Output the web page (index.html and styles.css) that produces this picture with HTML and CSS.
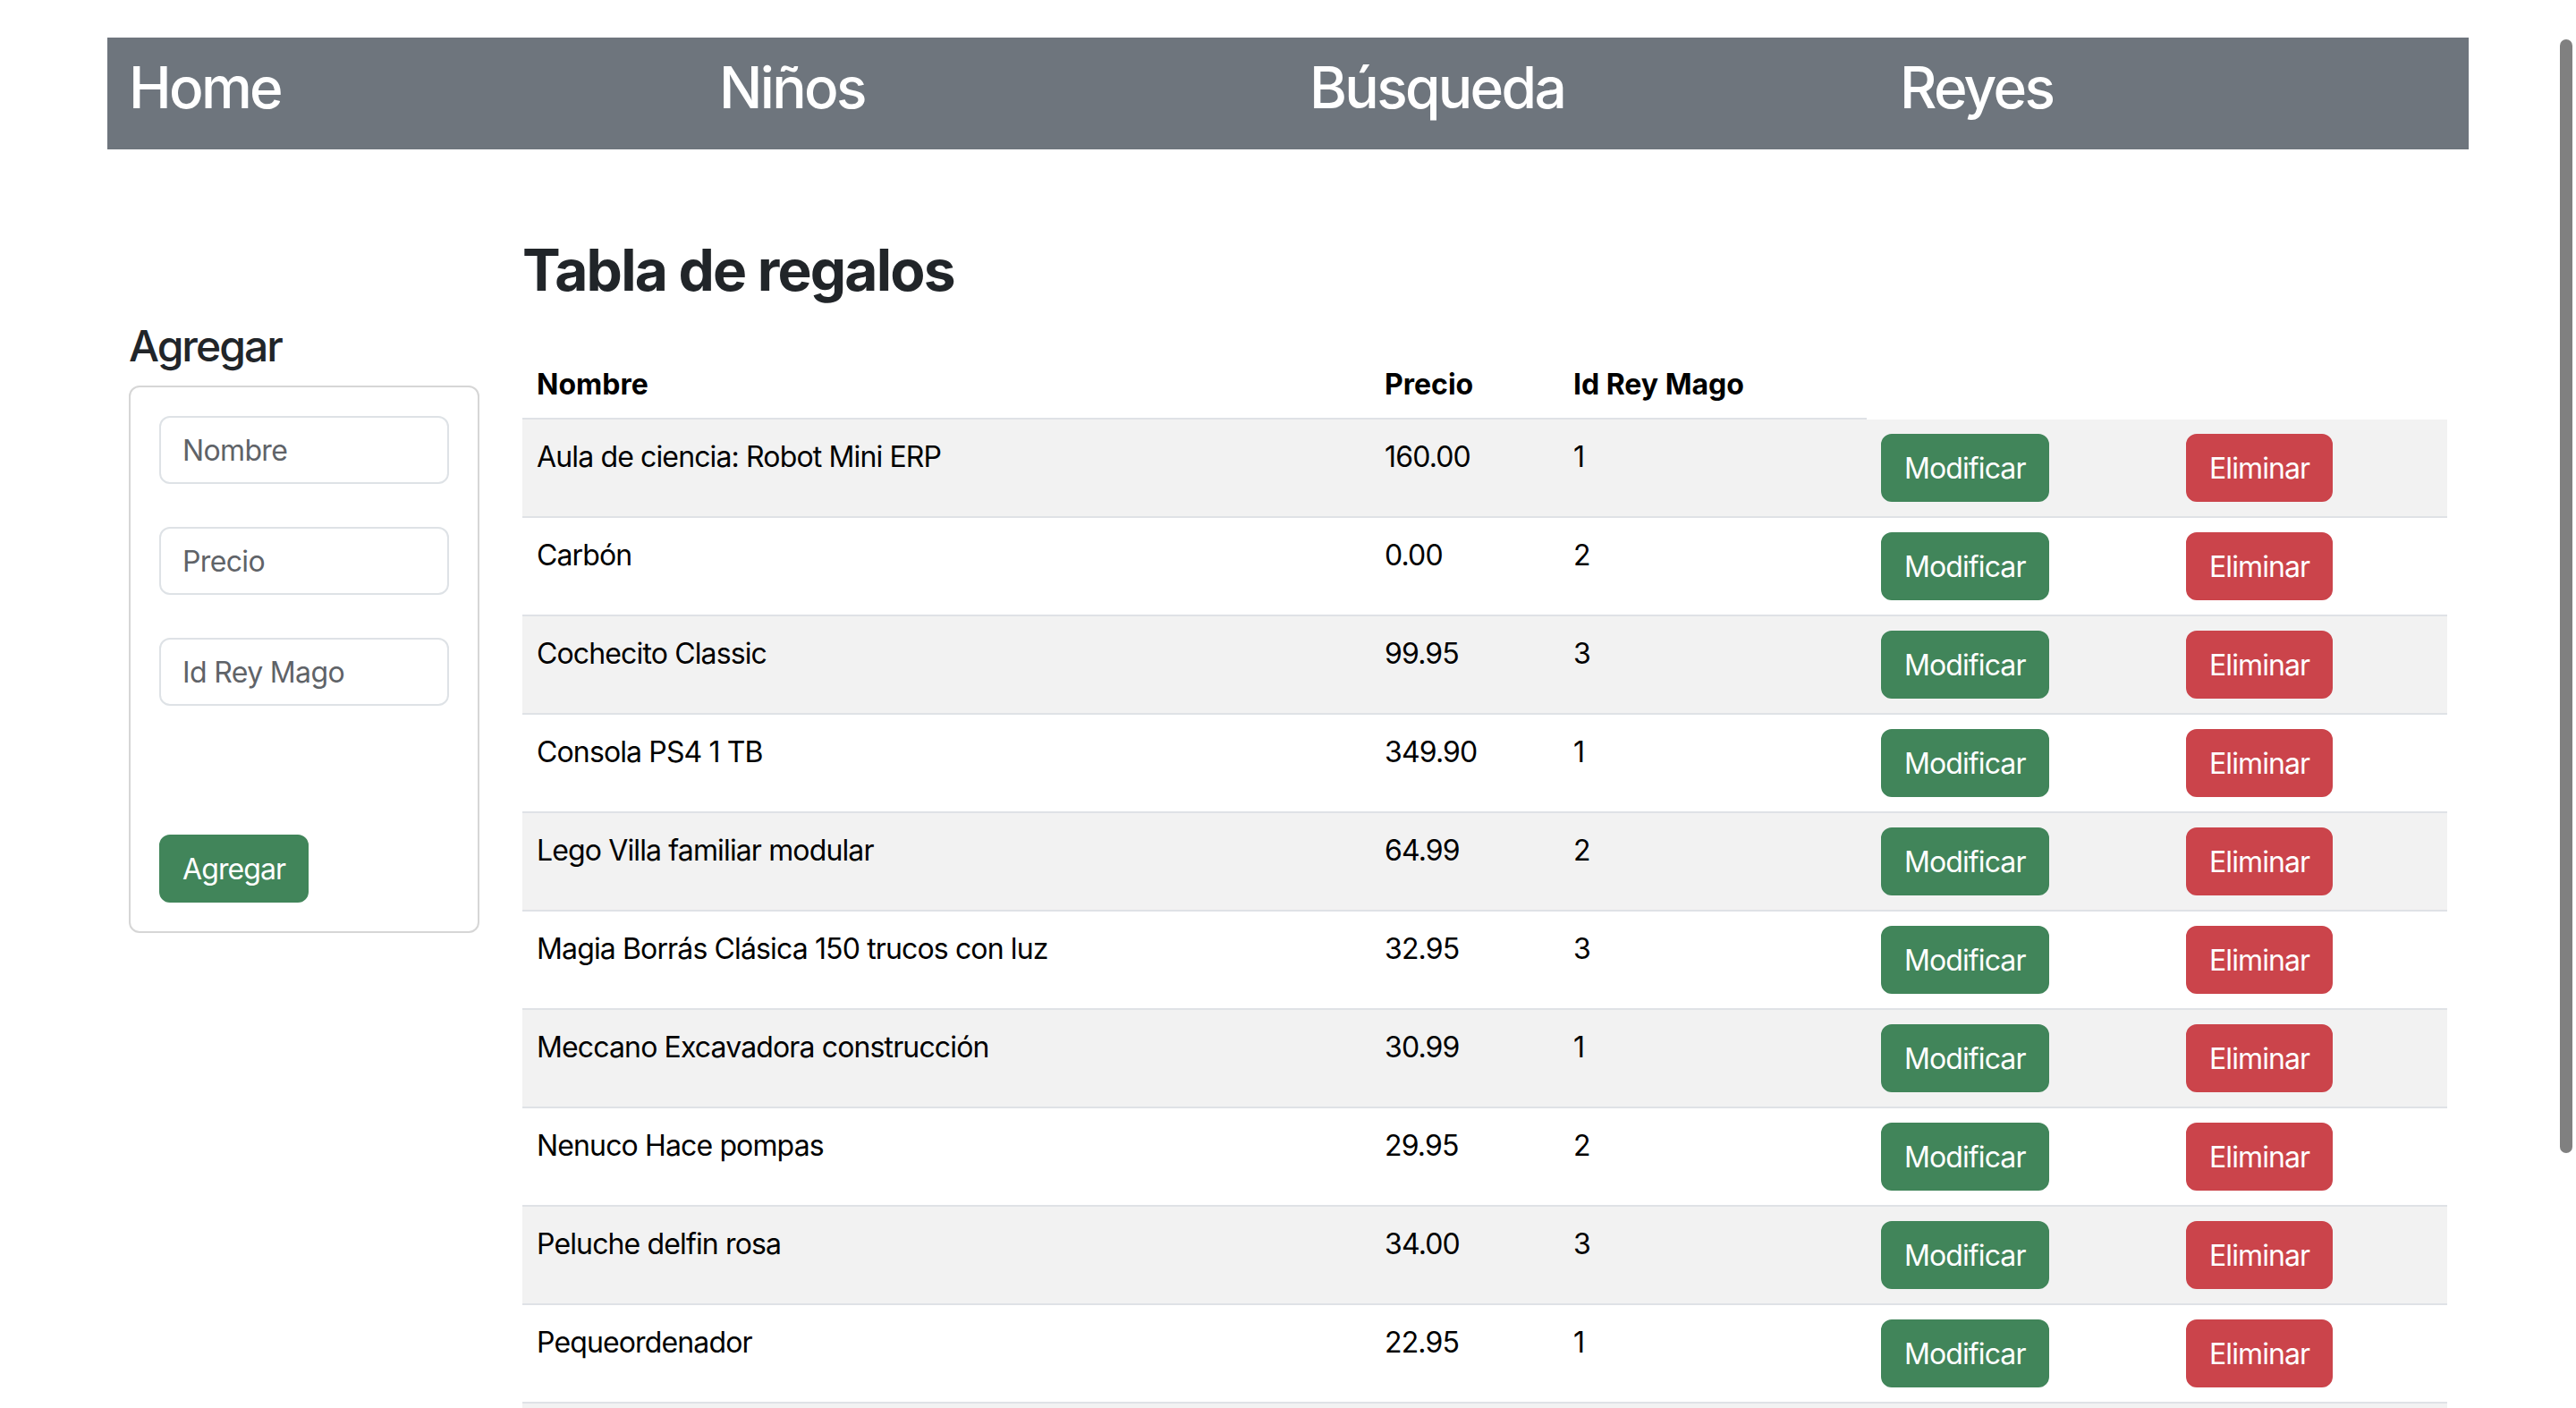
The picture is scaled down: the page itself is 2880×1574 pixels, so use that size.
FILE: index.html
```html
<!DOCTYPE html>
<html lang="es">
<head>
<meta charset="utf-8">
<title>Regalos de Reyes</title>
<link rel="stylesheet" href="styles.css">
</head>
<body>
<nav class="topnav">
  <div class="topnav-row">
    <div class="topnav-col"><h2 class="topnav-title">Home</h2></div>
    <div class="topnav-col"><h2 class="topnav-title">Niños</h2></div>
    <div class="topnav-col"><h2 class="topnav-title">Búsqueda</h2></div>
    <div class="topnav-col"><h2 class="topnav-title">Reyes</h2></div>
  </div>
</nav>
<main class="layout">
  <aside class="sidebar">
    <h4 class="sidebar-title">Agregar</h4>
    <form class="card">
      <input class="field" type="text" placeholder="Nombre">
      <input class="field" type="text" placeholder="Precio">
      <input class="field" type="text" placeholder="Id Rey Mago">
      <button class="btn btn-success btn-add" type="button">Agregar</button>
    </form>
  </aside>
  <section class="content">
    <h2 class="content-title">Tabla de regalos</h2>
    <table class="gifts">
      <colgroup>
        <col class="col-name">
        <col class="col-price">
        <col class="col-king">
        <col class="col-edit">
        <col class="col-del">
      </colgroup>
      <thead>
        <tr><th>Nombre</th><th>Precio</th><th>Id Rey Mago</th></tr>
      </thead>
      <tbody>
        <tr><td>Aula de ciencia: Robot Mini ERP</td><td>160.00</td><td>1</td><td><button class="btn btn-success" type="button">Modificar</button></td><td><button class="btn btn-danger" type="button">Eliminar</button></td></tr>
        <tr><td>Carbón</td><td>0.00</td><td>2</td><td><button class="btn btn-success" type="button">Modificar</button></td><td><button class="btn btn-danger" type="button">Eliminar</button></td></tr>
        <tr><td>Cochecito Classic</td><td>99.95</td><td>3</td><td><button class="btn btn-success" type="button">Modificar</button></td><td><button class="btn btn-danger" type="button">Eliminar</button></td></tr>
        <tr><td>Consola PS4 1 TB</td><td>349.90</td><td>1</td><td><button class="btn btn-success" type="button">Modificar</button></td><td><button class="btn btn-danger" type="button">Eliminar</button></td></tr>
        <tr><td>Lego Villa familiar modular</td><td>64.99</td><td>2</td><td><button class="btn btn-success" type="button">Modificar</button></td><td><button class="btn btn-danger" type="button">Eliminar</button></td></tr>
        <tr><td>Magia Borrás Clásica 150 trucos con luz</td><td>32.95</td><td>3</td><td><button class="btn btn-success" type="button">Modificar</button></td><td><button class="btn btn-danger" type="button">Eliminar</button></td></tr>
        <tr><td>Meccano Excavadora construcción</td><td>30.99</td><td>1</td><td><button class="btn btn-success" type="button">Modificar</button></td><td><button class="btn btn-danger" type="button">Eliminar</button></td></tr>
        <tr><td>Nenuco Hace pompas</td><td>29.95</td><td>2</td><td><button class="btn btn-success" type="button">Modificar</button></td><td><button class="btn btn-danger" type="button">Eliminar</button></td></tr>
        <tr><td>Peluche delfin rosa</td><td>34.00</td><td>3</td><td><button class="btn btn-success" type="button">Modificar</button></td><td><button class="btn btn-danger" type="button">Eliminar</button></td></tr>
        <tr><td>Pequeordenador</td><td>22.95</td><td>1</td><td><button class="btn btn-success" type="button">Modificar</button></td><td><button class="btn btn-danger" type="button">Eliminar</button></td></tr>
        <tr><td>Puzzle 1000 piezas</td><td>14.95</td><td>2</td><td><button class="btn btn-success" type="button">Modificar</button></td><td><button class="btn btn-danger" type="button">Eliminar</button></td></tr>
        <tr><td>Scalextric Mini</td><td>59.99</td><td>3</td><td><button class="btn btn-success" type="button">Modificar</button></td><td><button class="btn btn-danger" type="button">Eliminar</button></td></tr>
      </tbody>
    </table>
  </section>
</main>
<div class="scroll-thumb"></div>
</body>
</html>
```
FILE: styles.css
```css
html {
  scrollbar-width: none;
}
html::-webkit-scrollbar {
  display: none;
}
* {
  box-sizing: border-box;
}
body {
  margin: 0;
  font-family: Inter, "Noto Sans", "Liberation Sans", sans-serif;
  font-size: 32px;
  line-height: 1.5;
  color: #212529;
  background: #fff;
}

/* top navigation */
.topnav {
  width: 2640px;
  margin: 42px auto 0;
  padding: 16px 0;
  background: #6e757d;
}
.topnav-row {
  display: grid;
  grid-template-columns: repeat(4, 1fr);
}
.topnav-col {
  padding: 0 24px;
}
.topnav-title {
  margin: 0 0 16px;
  padding-top: 2px;
  height: 76.8px;
  font-size: 64px;
  font-weight: 500;
  line-height: 1.2;
  letter-spacing: -0.042em;
  color: #fff;
}

/* main layout */
.layout {
  width: 2640px;
  margin: 97px auto 0;
  display: grid;
  grid-template-columns: 440px 2200px;
  align-items: start;
}
.sidebar {
  padding: 94px 24px 0;
}
.sidebar-title {
  margin: 0 0 16px;
  font-size: 48px;
  font-weight: 500;
  line-height: 1.2;
  letter-spacing: -0.042em;
  color: #212529;
}
.card {
  display: flex;
  flex-direction: column;
  padding: 32px;
  border: 2px solid #d6d6d6;
  border-radius: 12px;
}
.field {
  display: block;
  width: 100%;
  height: 76px;
  margin: 0 0 48px;
  padding: 12px 24px;
  font-family: inherit;
  font-size: 32px;
  line-height: 48px;
  letter-spacing: -0.02em;
  color: #212529;
  background: #fff;
  border: 2px solid #dee2e6;
  border-radius: 12px;
  outline: none;
}
.field::placeholder {
  color: #5f6368;
}
.btn {
  display: inline-block;
  vertical-align: top;
  padding: 13px 24px 11px;
  font-family: inherit;
  font-size: 32px;
  font-weight: 400;
  line-height: 48px;
  letter-spacing: -0.028em;
  color: #fff;
  border: 2px solid transparent;
  border-radius: 12px;
  cursor: pointer;
}
.btn-success {
  background: #41855a;
  border-color: #41855a;
}
.btn-danger {
  background: #cb444b;
  border-color: #cb444b;
}
.btn-add {
  align-self: flex-start;
  margin-top: 96px;
}

/* content */
.content {
  padding: 0 24px;
}
.content-title {
  margin: 0 0 46px;
  font-size: 64px;
  font-weight: 700;
  line-height: 1.2;
  letter-spacing: -0.028em;
  color: #212529;
}
.gifts {
  width: 100%;
  table-layout: fixed;
  border-collapse: separate;
  border-spacing: 0;
  color: #000;
}
.col-name { width: 948px; }
.col-price { width: 211px; }
.col-king { width: 344px; }
.col-edit { width: 341px; }
.col-del { width: 308px; }
.gifts th,
.gifts td {
  padding: 18px 16px 14px;
  text-align: left;
  vertical-align: top;
  line-height: 48px;
  letter-spacing: -0.027em;
  border-bottom: 2px solid #dfe2e6;
}
.gifts th {
  padding: 19px 16px 13px;
  font-weight: 700;
  letter-spacing: 0;
}
.gifts td:nth-child(4),
.gifts td:nth-child(5) {
  padding: 16px;
}
.gifts tbody tr:nth-child(odd) td {
  background: #f2f2f2;
}

/* overlay scrollbar thumb */
.scroll-thumb {
  position: fixed;
  top: 44px;
  right: 4px;
  width: 14px;
  height: 1245px;
  background: #808080;
  border-radius: 7px;
}
```
